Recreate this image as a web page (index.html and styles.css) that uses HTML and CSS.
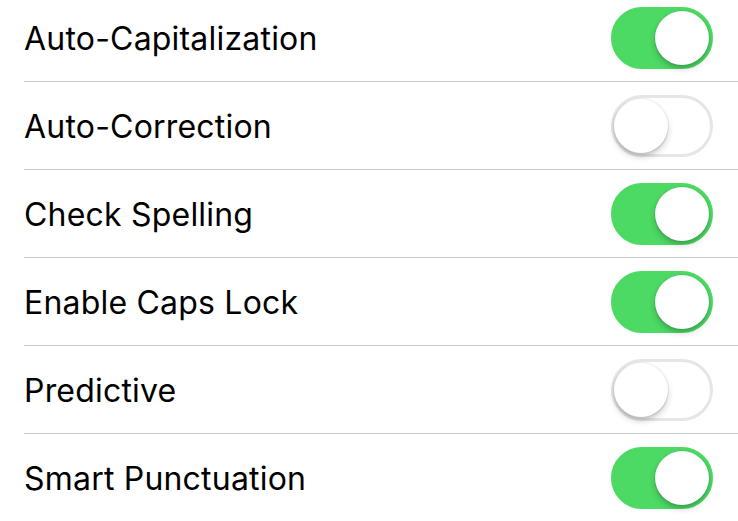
FILE: index.html
```html
<!DOCTYPE html>
<html>
<head>
<meta charset="utf-8">
<link rel="stylesheet" href="styles.css">
</head>
<body>
<div class="list">
  <div class="row"><span class="label">Auto-Capitalization</span><span class="switch on"><span class="knob"></span></span></div>
  <div class="row"><span class="label">Auto-Correction</span><span class="switch"><span class="knob"></span></span></div>
  <div class="row"><span class="label">Check Spelling</span><span class="switch on"><span class="knob"></span></span></div>
  <div class="row"><span class="label">Enable Caps Lock</span><span class="switch on"><span class="knob"></span></span></div>
  <div class="row"><span class="label">Predictive</span><span class="switch"><span class="knob"></span></span></div>
  <div class="row"><span class="label">Smart Punctuation</span><span class="switch on"><span class="knob"></span></span></div>
</div>
</body>
</html>
```
FILE: styles.css
```css
html, body {
  margin: 0;
  padding: 0;
  background: #fff;
  overflow: hidden;
}
.list {
  margin-top: -6px;
  padding-left: 24px;
}
.row {
  height: 87px;
  display: flex;
  align-items: center;
  justify-content: space-between;
  padding-right: 25px;
  border-bottom: 1px solid #c8c7cc;
}
.row:last-child {
  border-bottom: none;
}
.label {
  font-family: Inter, "Noto Sans", sans-serif;
  font-size: 32px;
  color: #000;
  letter-spacing: 0.2px;
  margin-top: 1px;
}
.switch {
  position: relative;
  width: 102px;
  height: 62px;
  box-sizing: border-box;
  border-radius: 31px;
  border: 3px solid #e6e6e9;
  background: #fff;
}
.switch.on {
  background: #4cd964;
  border-color: #4cd964;
}
.knob {
  position: absolute;
  top: 1px;
  left: 0px;
  width: 54px;
  height: 54px;
  border-radius: 50%;
  background: #fff;
  box-shadow: 0 0 0 1px rgba(0,0,0,0.06), 0 4px 6px rgba(0,0,0,0.18), 0 3px 1px rgba(0,0,0,0.05);
}
.switch.on .knob {
  left: 41px;
}
```
